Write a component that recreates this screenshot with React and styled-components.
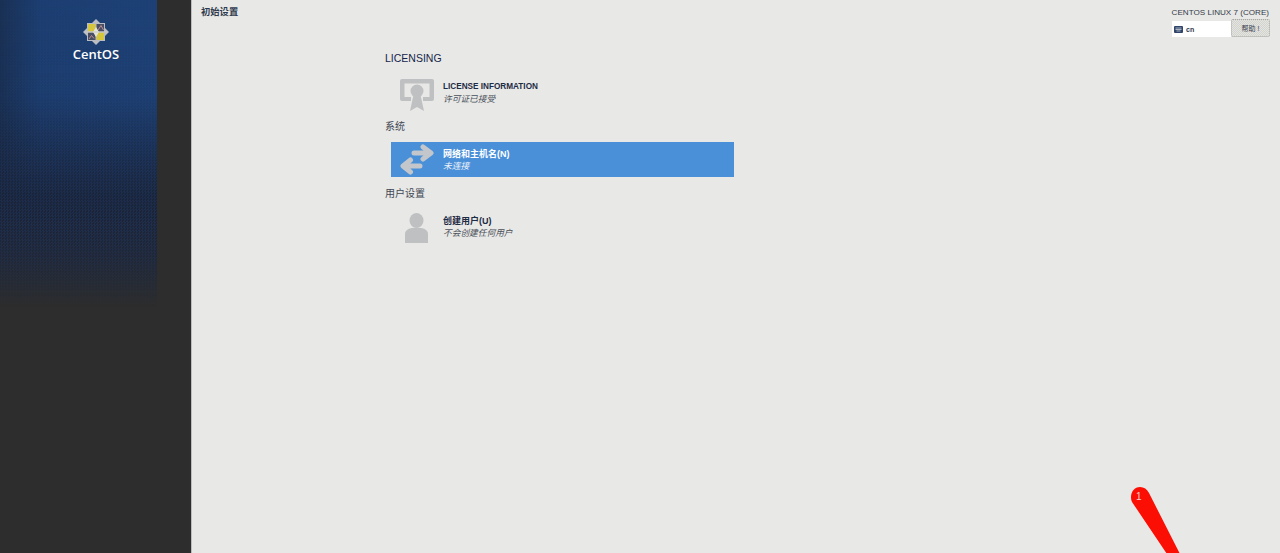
import styled, { createGlobalStyle } from "styled-components";

const GlobalStyle = createGlobalStyle`
    html, body {
        margin: 0;
        padding: 0;
        height: 100%;
        overflow: hidden;
    }
    #root {
        height: 100%;
    }
    * {
        box-sizing: border-box;
    }
`

const FONT = `"Liberation Sans", "Noto Sans CJK SC", sans-serif`

function CentosMark() {
    return (
        <svg width="26" height="26" viewBox="0 0 26 26">
            <path d="M13 0 L17 4 L22 4 L22 9 L26 13 L22 17 L22 22 L17 22 L13 26 L9 22 L4 22 L4 17 L0 13 L4 9 L4 4 L9 4 Z" fill="#b9bcc0" />
            <rect x="5" y="5" width="7.500" height="7.500" fill="#d6c63e" />
            <rect x="13.500" y="5" width="7.500" height="7.500" fill="#4a4e62" />
            <rect x="5" y="13.500" width="7.500" height="7.500" fill="#4a4e62" />
            <rect x="13.500" y="13.500" width="7.500" height="7.500" fill="#d6c63e" />
            <path d="M15 11 L18 6.500 L20.500 11 M6 20 L8.500 16.500 L11 19.500" fill="none" stroke="#d9a0a0" strokeWidth="0.800" />
            <path d="M13 8 L16 13 L13 18 L10 13 Z" fill="#e6e4d8" />
            <path d="M2 13 H24" stroke="#c8cacc" strokeWidth="1" />
        </svg>
    )
}

function LicenseIcon() {
    return (
        <svg width="34" height="32" viewBox="0 0 34 32">
            <path d="M2 0 H32 A2 2 0 0 1 34 2 V20 A2 2 0 0 1 32 22 H23 V18 H29.500 V4.500 H4.500 V18 H11 V22 H2 A2 2 0 0 1 0 20 V2 A2 2 0 0 1 2 0 Z" fill="#bfc0c2" />
            <circle cx="17" cy="12" r="6.500" fill="#bfc0c2" />
            <path d="M13.500 16 H20.500 L24 32 L17 28 L10 32 Z" fill="#bfc0c2" />
        </svg>
    )
}

function NetworkIcon() {
    return (
        <svg width="34" height="32" viewBox="0 0 34 32" fill="none" stroke="#c3c7cc" strokeWidth="5" strokeLinecap="round" strokeLinejoin="round">
            <path d="M14 9 H30 M23 3 L31 9 L23 15" />
            <path d="M20 22 H4 M10.500 16 L3 22 L10.500 28" />
        </svg>
    )
}

function UserIcon() {
    return (
        <svg width="24" height="30" viewBox="0 0 24 30">
            <ellipse cx="11.500" cy="7.500" rx="7" ry="7.500" fill="#bfc0c2" />
            <path d="M0 30 V21 C0 17 4 15.500 7 15 H16 C19 15.500 23 17 23 21 V30 Z" fill="#bfc0c2" />
        </svg>
    )
}

function KeyboardIcon() {
    return (
        <svg width="9" height="7" viewBox="0 0 9 7">
            <rect width="9" height="7" rx="1" fill="#2f4468" />
            <path d="M1.500 2 H7.500 M1.500 3.500 H7.500 M2.500 5 H6.500" stroke="#dfe4ec" strokeWidth="0.700" />
        </svg>
    )
}

function Pointer() {
    return (
        <PointerSvg width="60" height="70" viewBox="0 0 60 70">
            <path d="M6 18 C3 11 7 3 14 3 C18 3 21 5 23 9 L54 70 L41 70 Z" fill="#fb0f05" />
        </PointerSvg>
    )
}

export default function App() {
    return (
        <>
            <GlobalStyle />
            <Page>
                <Sidebar>
                    <Banner>
                        <Logo>
                            <CentosMark />
                            <LogoText>CentOS</LogoText>
                        </Logo>
                    </Banner>
                </Sidebar>
                <Main>
                    <TopBar>
                        <Title>初始设置</Title>
                        <Product>
                            <ProductName>CENTOS LINUX 7 (CORE)</ProductName>
                            <Controls>
                                <Layout><KeyboardIcon /><span>cn</span></Layout>
                                <HelpButton>帮助 !</HelpButton>
                            </Controls>
                        </Product>
                    </TopBar>
                    <Hub>
                        <Heading $latin>LICENSING</Heading>
                        <Spoke>
                            <SpokeIcon $nudge={5}><LicenseIcon /></SpokeIcon>
                            <SpokeText>
                                <SpokeName $latin>LICENSE INFORMATION</SpokeName>
                                <SpokeStatus>许可证已接受</SpokeStatus>
                            </SpokeText>
                        </Spoke>
                        <Heading>系统</Heading>
                        <Spoke $selected>
                            <SpokeIcon><NetworkIcon /></SpokeIcon>
                            <SpokeText>
                                <SpokeName $selected>网络和主机名(N)</SpokeName>
                                <SpokeStatus $selected>未连接</SpokeStatus>
                            </SpokeText>
                        </Spoke>
                        <Heading>用户设置</Heading>
                        <Spoke>
                            <SpokeIcon $nudge={2}><UserIcon /></SpokeIcon>
                            <SpokeText>
                                <SpokeName>创建用户(U)</SpokeName>
                                <SpokeStatus>不会创建任何用户</SpokeStatus>
                            </SpokeText>
                        </Spoke>
                    </Hub>
                    <Pointer />
                    <PointerLabel>1</PointerLabel>
                </Main>
            </Page>
        </>
    )
}

const Page = styled.div`
    display: flex;
    width: 1280px;
    height: 553px;
    font-family: ${FONT};
    background-color: #e8e8e6;
    overflow: hidden;
`

const Sidebar = styled.div`
    width: 192px;
    flex-shrink: 0;
    background-color: #2d2d2d;
    border-right: 1px solid #bdbdbd;
`

const Banner = styled.div`
    position: relative;
    width: 157px;
    height: 320px;
    display: flex;
    justify-content: center;
    padding: 19px 0 0 35px;
    background:
        linear-gradient(to bottom, rgba(28,38,60,0) 0, rgba(28,38,60,0) 30%, rgba(28,38,60,0.95) 62%, #232a3a 80%, #2d2d2d 96%),
        linear-gradient(to right, #1a3155 0, #1d3f73 25%, #1e4278 100%);

    &::after {
        content: "";
        position: absolute;
        inset: 0;
        background: repeating-conic-gradient(rgba(28,56,102,0.5) 0 25%, rgba(22,28,42,0.5) 0 50%) 0 0 / 3px 3px;
        mask-image: linear-gradient(to bottom, rgba(0,0,0,0.08) 0, rgba(0,0,0,0.25) 35%, rgba(0,0,0,0.7) 70%, transparent 96%);
    }
`

const Logo = styled.div`
    position: relative;
    z-index: 1;
    display: flex;
    flex-direction: column;
    align-items: center;
    gap: 2px;
`

const LogoText = styled.div`
    font-family: "Open Sans", sans-serif;
    font-size: 13px;
    line-height: 14px;
    font-weight: 600;
    color: #ffffff;
`

const Main = styled.div`
    position: relative;
    flex: 1;
    display: flex;
    flex-direction: column;
`

const TopBar = styled.div`
    display: flex;
    justify-content: space-between;
    height: 51px;
    padding: 6px 10px 0 9px;
`

const Title = styled.div`
    font-size: 9.300px;
    line-height: 13px;
    font-weight: 700;
    color: #2e3a4e;
`

const Product = styled.div`
    display: flex;
    flex-direction: column;
    align-items: flex-end;
    width: 98px;
`

const ProductName = styled.div`
    font-size: 8.100px;
    line-height: 13px;
    color: #333b4a;
    white-space: nowrap;
    padding-right: 1px;
`

const Controls = styled.div`
    display: flex;
    align-items: flex-end;
    height: 18px;
`

const Layout = styled.div`
    display: flex;
    align-items: center;
    gap: 3px;
    width: 59px;
    height: 16px;
    padding-left: 2px;
    background-color: #ffffff;
    font-size: 7px;
    font-weight: 700;
    color: #2e3a4e;
`

const HelpButton = styled.div`
    width: 39px;
    height: 18px;
    display: flex;
    align-items: center;
    justify-content: center;
    font-size: 7px;
    color: #3a4252;
    background: repeating-conic-gradient(#d2d2ce 0 25%, #e4e4e0 0 50%) 0 0 / 2px 2px;
    border: 1px dotted #a8a8a4;
    border-radius: 2px;
`

const Hub = styled.div`
    display: flex;
    flex-direction: column;
    margin-left: 193px;
    width: 350px;
`

const Heading = styled.div`
    height: 15px;
    line-height: 15px;
    font-size: ${p => p.$latin ? "10.500px" : "10px"};
    color: ${p => p.$latin ? "#15264c" : "#3f4754"};
    margin-bottom: ${p => p.$latin ? "9px" : "8px"};
`

const Spoke = styled.div`
    display: flex;
    align-items: center;
    width: 343px;
    height: 35px;
    margin: 0 0 9px 6px;
    padding-left: 8px;
    background-color: ${p => p.$selected ? "#4a90d9" : "transparent"};
`

const SpokeIcon = styled.div`
    width: 44px;
    flex-shrink: 0;
    display: flex;
    justify-content: center;
    padding-right: 9px;
    margin-top: ${p => p.$nudge || 0}px;
`

const SpokeText = styled.div`
    display: flex;
    flex-direction: column;
`

const SpokeName = styled.div`
    font-size: ${p => p.$latin ? "8.200px" : "9px"};
    line-height: 12px;
    font-weight: 700;
    color: ${p => p.$selected ? "#ffffff" : "#1d2b45"};
`

const SpokeStatus = styled.div`
    font-size: 8.700px;
    line-height: 12px;
    font-style: italic;
    color: ${p => p.$selected ? "#f0f4fa" : "#4a505a"};
`

const PointerSvg = styled.svg`
    position: absolute;
    left: 934px;
    top: 484px;
`

const PointerLabel = styled.div`
    position: absolute;
    left: 944px;
    top: 491px;
    font-size: 10px;
    line-height: 12px;
    color: #f6d0cc;
`
